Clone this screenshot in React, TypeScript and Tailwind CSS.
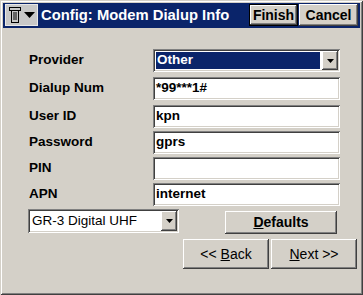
import React from "react";

const sunken =
  "shadow-[inset_1px_1px_0_#808080,inset_-1px_-1px_0_#ffffff,inset_2px_2px_0_#404040,inset_-2px_-2px_0_#d4d0c8]";
const raised =
  "shadow-[inset_-1px_-1px_0_#404040,inset_1px_1px_0_#ffffff,inset_-2px_-2px_0_#808080,inset_2px_2px_0_#d4d0c8]";

function Arrow() {
  return (
    <svg width="7" height="4" viewBox="0 0 7 4">
      <path d="M0 0H7L3.5 4Z" fill="#000" />
    </svg>
  );
}

function DropBtn() {
  return (
    <div className={`w-[16px] h-[19px] bg-[#d4d0c8] flex items-center justify-center ${raised}`}>
      <Arrow />
    </div>
  );
}

function Row({ label, value, mt }: { label: string; value: string; mt: string }) {
  return (
    <div className={`flex items-center ${mt}`}>
      <div className="w-[150px] pl-[26px] text-[13.5px] font-bold text-black">{label}</div>
      <div className={`w-[187px] h-[23px] bg-white flex items-center pl-[3px] text-[13.5px] font-bold text-black ${sunken}`}>
        {value}
      </div>
    </div>
  );
}

export default function App() {
  return (
    <div
      className={`w-[363px] h-[295px] bg-[#d4d0c8] p-[3px] flex flex-col shadow-[inset_1px_1px_0_#d4d0c8,inset_-1px_-1px_0_#404040,inset_2px_2px_0_#ffffff,inset_-2px_-2px_0_#808080]`}
      style={{ fontFamily: '"Liberation Sans", Arial, sans-serif' }}
    >
      {/* Title bar */}
      <div className="h-[25px] bg-[#0a246a] flex items-start pt-[1px] pl-[2px] pr-[2px]">
        <div className="w-[33px] h-[22px] bg-[#c8c8c8] border border-[#e8e8e8] flex items-center pl-[3px] gap-[3px]">
          <svg width="12" height="16" viewBox="0 0 12 16">
            <rect x="0" y="0" width="12" height="4" fill="#000" />
            <rect x="1" y="1" width="10" height="2" fill="#c8c8c8" />
            <rect x="2.5" y="3.5" width="7" height="12" fill="none" stroke="#000" />
            <path d="M4 6H8M4 8H8M4 10H8M4 12H8" stroke="#000" strokeWidth="1" />
          </svg>
          <svg width="11" height="6" viewBox="0 0 11 6">
            <path d="M0 0H11L5.5 6Z" fill="#000" />
          </svg>
        </div>
        <div className="ml-[3px] h-[22px] flex items-center text-white font-bold text-[14.8px] whitespace-nowrap">
          Config: Modem Dialup Info
        </div>
        <div className="flex-1" />
        <div className="w-[49px] h-[22px] border border-black bg-[#d4d0c8]">
          <div className={`w-full h-full flex items-center justify-center text-[14px] font-bold text-black ${raised}`}>
            Finish
          </div>
        </div>
        <div className={`ml-[1px] w-[59px] h-[22px] bg-[#d4d0c8] flex items-center justify-center text-[14px] font-bold text-black ${raised}`}>
          Cancel
        </div>
      </div>

      {/* Provider */}
      <div className="flex items-center mt-[21px]">
        <div className="w-[150px] pl-[26px] text-[13.5px] font-bold text-black">Provider</div>
        <div className={`w-[187px] h-[23px] bg-white flex items-center p-[2px] ${sunken}`}>
          <div className="flex-1 h-full p-[1px] pr-[2px]">
            <div className="h-full bg-[#0a246a] text-white text-[13.5px] font-bold flex items-center pl-[1px]">
              Other
            </div>
          </div>
          <DropBtn />
        </div>
      </div>

      <Row label="Dialup Num" value="*99***1#" mt="mt-[5px]" />
      <Row label="User ID" value="kpn" mt="mt-[5px]" />
      <Row label="Password" value="gprs" mt="mt-[3px]" />
      <Row label="PIN" value="" mt="mt-[3px]" />
      <Row label="APN" value="internet" mt="mt-[3px]" />

      {/* GR-3 + Defaults */}
      <div className="flex items-start mt-[3px]">
        <div className="pl-[25px]">
          <div className={`w-[151px] h-[24px] bg-white flex items-center p-[2px] ${sunken}`}>
            <div className="flex-1 pl-[2px] text-[13.5px] text-black whitespace-nowrap">GR-3 Digital UHF</div>
            <div className="h-[20px] w-[16px]">
              <div className={`w-[16px] h-[20px] bg-[#d4d0c8] flex items-center justify-center ${raised}`}>
                <Arrow />
              </div>
            </div>
          </div>
        </div>
        <div className={`ml-[46px] mt-[2px] w-[112px] h-[23px] bg-[#d4d0c8] flex items-center justify-center text-[14px] font-bold text-black ${raised}`}>
          <span><span className="underline">D</span>efaults</span>
        </div>
      </div>

      {/* Back / Next */}
      <div className="flex mt-[5px] pl-[180px]">
        <div className={`w-[86px] h-[30px] bg-[#d4d0c8] flex items-center justify-center text-[14px] text-black ${raised}`}>
          <span>&lt;&lt; <span className="underline">B</span>ack</span>
        </div>
        <div className={`ml-[2px] w-[86px] h-[30px] bg-[#d4d0c8] flex items-center justify-center text-[14px] text-black ${raised}`}>
          <span><span className="underline">N</span>ext &gt;&gt;</span>
        </div>
      </div>
    </div>
  );
}
